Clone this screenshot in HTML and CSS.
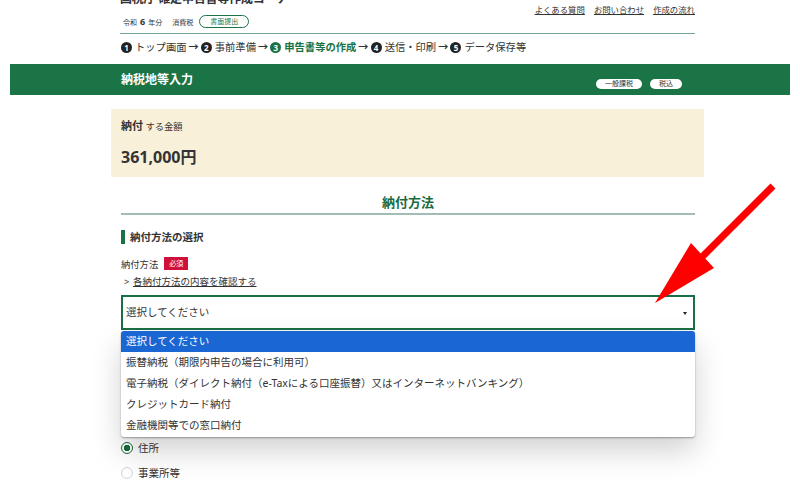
FILE: index.html
```html
<!DOCTYPE html>
<html lang="ja">
<head>
    <meta charset="UTF-8">
    <meta name="viewport" content="width=device-width, initial-scale=1.0">
    <title>納税地等入力 - 確定申告書等作成コーナー</title>
    <link rel="stylesheet" href="styles.css">
</head>
<body>

  <div class="header">
    <div class="header-brand">
      <div class="site-name">国税庁 確定申告書等作成コーナー</div>
      <div class="year-line">
        <span>令和</span><b class="year-num">6</b><span>年分</span>
        <span class="tax-kind">消費税</span>
        <span class="submit-badge">書面提出</span>
      </div>
    </div>
    <div class="header-links">
      <a href="#">よくある質問</a>
      <a href="#">お問い合わせ</a>
      <a href="#">作成の流れ</a>
    </div>
  </div>

  <div class="steps">
    <span class="step"><span class="step-num">1</span>トップ画面</span>
    <span class="step-arrow">→</span>
    <span class="step"><span class="step-num">2</span>事前準備</span>
    <span class="step-arrow">→</span>
    <span class="step current"><span class="step-num">3</span>申告書等の作成</span>
    <span class="step-arrow">→</span>
    <span class="step"><span class="step-num">4</span>送信・印刷</span>
    <span class="step-arrow">→</span>
    <span class="step"><span class="step-num">5</span>データ保存等</span>
  </div>

  <div class="page-bar">
    <h1>納税地等入力</h1>
    <div class="page-tags">
      <span class="tag">一般課税</span>
      <span class="tag">税込</span>
    </div>
  </div>

  <div class="content">

    <div class="amount-box">
      <div class="amount-label"><b>納付</b> する金額</div>
      <div class="amount-value">361,000円</div>
    </div>

    <h2>納付方法</h2>

    <div class="section-title">納付方法の選択</div>

    <div class="field-label">
      納付方法 <span class="required">必須</span>
    </div>
    <div class="field-link">
      <span class="chev">&gt;</span><a href="#">各納付方法の内容を確認する</a>
    </div>

    <!-- ドロップダウンが開いた状態 -->
    <div class="select-field">
      <div class="select-box">選択してください</div>
      <ul class="select-list">
        <li class="selected">選択してください</li>
        <li>振替納税（期限内申告の場合に利用可）</li>
        <li>電子納税（ダイレクト納付（e-Taxによる口座振替）又はインターネットバンキング）</li>
        <li>クレジットカード納付</li>
        <li>金融機関等での窓口納付</li>
      </ul>
    </div>

    <div class="radio-list">
      <label class="radio checked"><span class="radio-mark"></span>住所</label>
      <label class="radio"><span class="radio-mark"></span>事業所等</label>
    </div>

  </div>

  <svg class="pointer-arrow" width="800" height="500" viewBox="0 0 800 500">
    <line x1="773" y1="186" x2="700" y2="259" stroke="#ff0000" stroke-width="7"/>
    <polygon points="655,303 691,243 714,268" fill="#ff0000"/>
  </svg>

</body>
</html>
```

FILE: styles.css
```css
html {
    overflow: hidden;
}

body {
    margin: 0;
    background-color: #fff;
    color: #333;
    font-family: "Noto Sans", "Noto Sans CJK JP", sans-serif;
    position: relative;
    height: 500px;
}

a {
    color: #333;
}

/* ヘッダー */
.header {
    display: flex;
    justify-content: space-between;
    align-items: flex-start;
    margin: -8px 0 0 120px;
    width: 575px;
    padding-bottom: 5px;
    border-bottom: 1px solid #74a596;
}

.site-name {
    font-size: 12px;
    font-weight: bold;
    line-height: 13px;
    letter-spacing: -0.2px;
}

.year-line {
    display: flex;
    align-items: center;
    height: 13px;
    margin-top: 10px;
    font-size: 7px;
    padding-left: 3px;
}

.year-num {
    font-size: 9px;
    margin: 0 3px;
}

.tax-kind {
    margin-left: 10px;
}

.submit-badge {
    margin-left: 6px;
    height: 11px;
    line-height: 11px;
    padding: 0 10px;
    border: 1px solid #1a7346;
    border-radius: 7px;
    color: #1a7346;
}

.header-links {
    display: flex;
    gap: 9px;
    margin-top: 12px;
    font-size: 8.4px;
    line-height: 12px;
}

/* ステップ */
.steps {
    display: flex;
    align-items: center;
    margin: 7px 0 0 121px;
    height: 13px;
    font-size: 10.3px;
    line-height: 13px;
}

.step {
    display: flex;
    align-items: center;
}

.step-num {
    display: inline-block;
    width: 11px;
    height: 11px;
    border-radius: 50%;
    background-color: #222;
    color: #fff;
    font-size: 8px;
    font-weight: bold;
    line-height: 11px;
    text-align: center;
    margin-right: 3px;
}

.step.current {
    color: #1a7346;
    font-weight: bold;
}

.step.current .step-num {
    background-color: #1a7346;
}

.step-arrow {
    font-weight: bold;
    margin: 0 2px;
}

/* 緑の帯 */
.page-bar {
    display: flex;
    justify-content: space-between;
    align-items: center;
    height: 31px;
    margin: 10px 10px 0 10px;
    padding: 0 108px 0 111px;
    background-color: #1b7445;
}

.page-bar h1 {
    margin: 0;
    color: #fff;
    font-size: 12px;
    line-height: 16px;
    padding-top: 1px;
}

.page-tags {
    display: flex;
    gap: 8px;
    align-self: flex-end;
    margin-bottom: 6px;
}

.tag {
    height: 10px;
    line-height: 10px;
    padding: 0 9px;
    border-radius: 5px;
    background-color: #fff;
    color: #333;
    font-size: 7px;
}

/* 本文 */
.content {
    margin-left: 121px;
    width: 574px;
}

.amount-box {
    margin: 14px -9px 0 -10px;
    padding: 10px 10px 9px 10px;
    background-color: #f9f0d9;
}

.amount-label {
    font-size: 9.3px;
    line-height: 14px;
}

.amount-label b {
    font-size: 11px;
}

.amount-value {
    margin-top: 12px;
    font-size: 16px;
    font-weight: bold;
    line-height: 22px;
}

h2 {
    margin: 15px 0 0 0;
    padding-bottom: 1px;
    border-bottom: 2px solid #a3bdb6;
    color: #1a6b40;
    font-size: 13px;
    line-height: 20px;
    text-align: center;
}

.section-title {
    margin-top: 15px;
    padding-left: 5px;
    border-left: 4px solid #1a7346;
    font-size: 10.5px;
    font-weight: bold;
    line-height: 14px;
}

.field-label {
    display: flex;
    align-items: center;
    gap: 6px;
    margin-top: 13px;
    height: 13px;
    font-size: 9.3px;
}

.required {
    height: 13px;
    line-height: 13px;
    padding: 0 5px;
    background-color: #cf1139;
    color: #fff;
    font-size: 7px;
}

.field-link {
    margin-top: 5px;
    font-size: 9.5px;
    line-height: 14px;
}

.chev {
    display: inline-block;
    width: 12px;
    padding-left: 3px;
    box-sizing: border-box;
}

/* セレクト */
.select-field {
    position: relative;
    margin-top: 6px;
    z-index: 2;
}

.select-box {
    position: relative;
    height: 31px;
    padding-left: 3px;
    border: 2px solid #1a6e45;
    font-size: 10.5px;
    line-height: 31px;
}

.select-box::after {
    content: "";
    position: absolute;
    right: 6px;
    top: 15px;
    border-left: 2.5px solid transparent;
    border-right: 2.5px solid transparent;
    border-top: 3px solid #222;
}

.select-list {
    position: absolute;
    left: 0;
    right: 0;
    top: 36px;
    margin: 0;
    padding: 0;
    list-style: none;
    background-color: #fff;
    border-radius: 3px;
    box-shadow: 0 1px 2px rgba(0, 0, 0, 0.35), 0 14px 30px rgba(0, 0, 0, 0.18);
    overflow: hidden;
}

.select-list li {
    height: 21px;
    padding-left: 5px;
    font-size: 10.5px;
    line-height: 21px;
    white-space: nowrap;
}

.select-list li.selected {
    background-color: #1a66d2;
    color: #fff;
}

.select-list li:last-child {
    height: 22px;
}

/* ラジオ（上はドロップダウンに隠れている） */
.radio-list {
    margin-top: 105px;
}

.radio {
    display: flex;
    align-items: center;
    height: 25px;
    font-size: 10.5px;
}

.radio-mark {
    box-sizing: border-box;
    width: 12px;
    height: 12px;
    margin-right: 5px;
    border: 1px solid #d4d4d4;
    border-radius: 50%;
    background-color: #fff;
}

.radio.checked .radio-mark {
    border: 1.5px solid #1a6b40;
    background: radial-gradient(circle, #1a6b40 0 3px, #fff 3.5px);
}

/* 赤い矢印 */
.pointer-arrow {
    position: absolute;
    left: 0;
    top: 0;
    pointer-events: none;
    z-index: 5;
}
```
